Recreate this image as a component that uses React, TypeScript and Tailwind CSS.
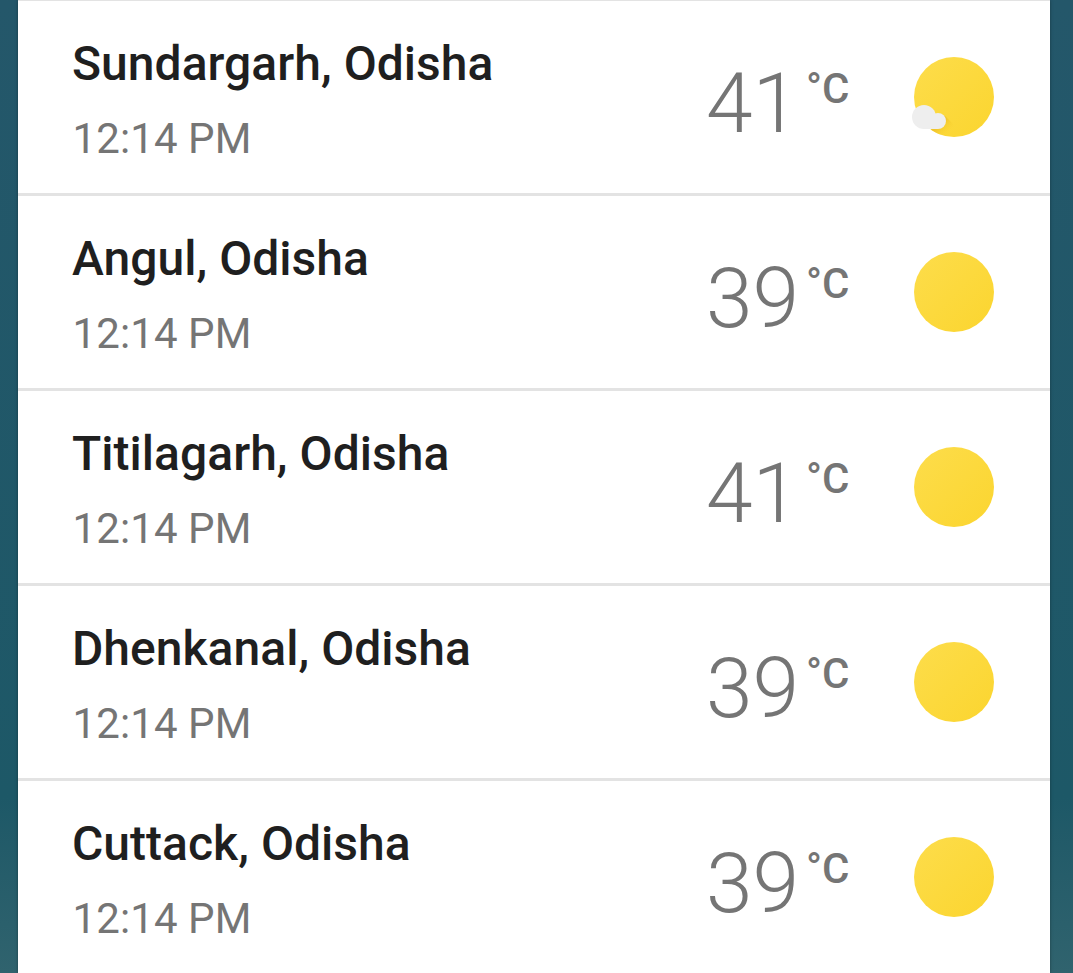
type Place = {
  name: string;
  time: string;
  temp: number;
  cloudy?: boolean;
};

const places: Place[] = [
  { name: "Sundargarh, Odisha", time: "12:14 PM", temp: 41, cloudy: true },
  { name: "Angul, Odisha", time: "12:14 PM", temp: 39 },
  { name: "Titilagarh, Odisha", time: "12:14 PM", temp: 41 },
  { name: "Dhenkanal, Odisha", time: "12:14 PM", temp: 39 },
  { name: "Cuttack, Odisha", time: "12:14 PM", temp: 39 },
];

function WeatherIcon({ cloudy }: { cloudy?: boolean }) {
  return (
    <svg width="82" height="80" viewBox="-2 0 82 80" className="block">
      <defs>
        <linearGradient id="sun" x1="0" y1="0" x2="1" y2="1">
          <stop offset="0" stopColor="#fddd4b" />
          <stop offset="1" stopColor="#fbd52f" />
        </linearGradient>
        <linearGradient
          id="shade"
          gradientUnits="userSpaceOnUse"
          x1="24"
          y1="62"
          x2="36"
          y2="74"
        >
          <stop offset="0.3" stopColor="#f0c42c" />
          <stop offset="1" stopColor="#fbd530" stopOpacity="0" />
        </linearGradient>
      </defs>
      <circle cx="40" cy="40" r="40" fill="url(#sun)" />
      {cloudy && (
        <>
          <path
            d="M30 58 L48 76 L46 79.500 A40 40 0 0 1 17 72.700 Z"
            fill="url(#shade)"
          />
          <g fill="#eeeeee">
            <circle cx="10" cy="60" r="12" />
            <circle cx="24" cy="64" r="8" />
            <rect x="10" y="60" width="14" height="12" />
          </g>
        </>
      )}
    </svg>
  );
}

function PlaceRow({ place }: { place: Place }) {
  return (
    <li className="flex h-[195px] shrink-0 items-start justify-between border-b-3 border-[#e3e3e3] pr-14 pl-[54px]">
      <div className="pt-[35px]">
        <h2 className="text-[48px] leading-[56px] font-medium tracking-[0.03px] text-[#1f1f1f]">
          {place.name}
        </h2>
        <p className="mt-[22px] ml-[0.5px] text-[42px] leading-[50px] tracking-[0.1px] text-[#757575]">
          {place.time}
        </p>
      </div>

      <div className="flex items-start text-[#757575]">
        <div className="mt-[54px] flex w-[206px] items-start">
          <span className="w-[100px] text-[84px] leading-[98px] font-light">
            {place.temp}
          </span>
          <span className="mt-[9px] text-[42px] leading-[50px] font-medium">
            °C
          </span>
        </div>
        <div className="mt-14">
          <WeatherIcon cloudy={place.cloudy} />
        </div>
      </div>
    </li>
  );
}

export default function App() {
  return (
    <div className="h-screen overflow-hidden bg-linear-to-b from-[#24576a] via-[#1d5867] via-82% to-[#30636e] pr-[23px] pl-[18px] font-[Roboto,sans-serif]">
      <ul className="flex h-full flex-col overflow-hidden border-t border-[#e3e3e3] bg-white shadow-[0_0_3px_rgba(0,0,0,0.35)]">
        {places.map((place) => (
          <PlaceRow key={place.name} place={place} />
        ))}
      </ul>
    </div>
  );
}
